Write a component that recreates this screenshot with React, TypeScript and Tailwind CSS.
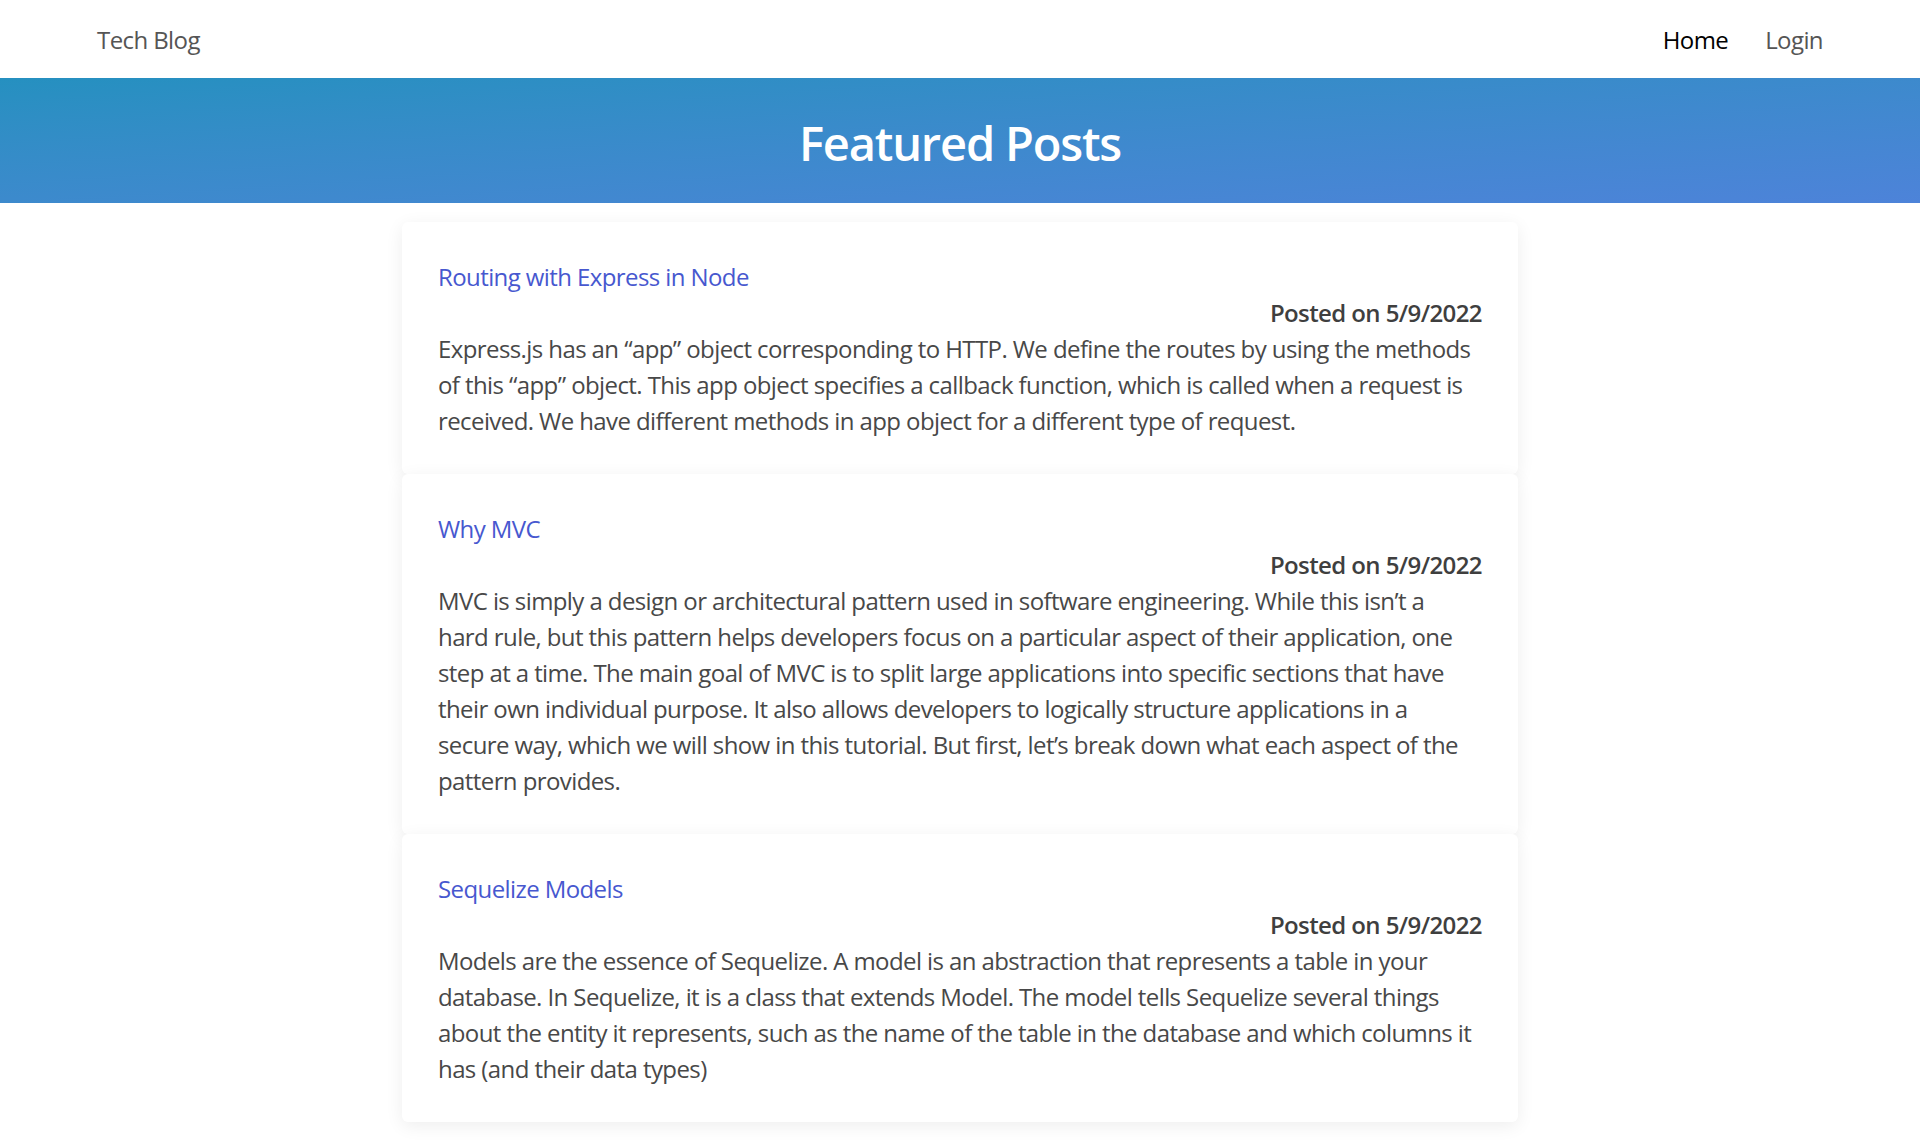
const posts = [
  {
    title: "Routing with Express in Node",
    date: "5/9/2022",
    lines: [
      "Express.js has an \u201capp\u201d object corresponding to HTTP. We define the routes by using the methods",
      "of this \u201capp\u201d object. This app object specifies a callback function, which is called when a request is",
      "received. We have different methods in app object for a different type of request.",
    ],
  },
  {
    title: "Why MVC",
    date: "5/9/2022",
    lines: [
      "MVC is simply a design or architectural pattern used in software engineering. While this isn\u2019t a",
      "hard rule, but this pattern helps developers focus on a particular aspect of their application, one",
      "step at a time. The main goal of MVC is to split large applications into specific sections that have",
      "their own individual purpose. It also allows developers to logically structure applications in a",
      "secure way, which we will show in this tutorial. But first, let\u2019s break down what each aspect of the",
      "pattern provides.",
    ],
  },
  {
    title: "Sequelize Models",
    date: "5/9/2022",
    lines: [
      "Models are the essence of Sequelize. A model is an abstraction that represents a table in your",
      "database. In Sequelize, it is a class that extends Model. The model tells Sequelize several things",
      "about the entity it represents, such as the name of the table in the database and which columns it",
      "has (and their data types)",
    ],
  },
];

const PostCard = ({ title, date, lines }: { title: string; date: string; lines: string[] }) => {
  return (
    <div className="rounded-md bg-white px-9 pt-[37px] pb-[35px] shadow-[0_4px_18px_rgba(0,0,0,0.07)]">
      <a href="#" className="block text-[24px] leading-[36px] text-[#4758cf]">
        {title}
      </a>
      <p className="text-right text-[24px] font-semibold leading-[36px] text-[#3f3f3f]">
        Posted on {date}
      </p>
      <p className="whitespace-nowrap text-[24px] leading-[36px] text-[#484848]">
        {lines.map((line, i) => (
          <span key={i}>
            {line}
            {i < lines.length - 1 && <br />}
          </span>
        ))}
      </p>
    </div>
  );
};

export default function App() {
  return (
    <div className="min-h-[1140px] bg-white font-['Segoe_UI','Open_Sans',sans-serif] tracking-[-0.037em]">
      <nav className="flex h-[78px] items-center justify-between px-[97px] pt-[2px]">
        <a href="#" className="text-[24px] text-[#555]">
          Tech Blog
        </a>
        <div className="flex gap-[37px] text-[24px]">
          <a href="#" className="text-black">
            Home
          </a>
          <a href="#" className="text-[#555]">
            Login
          </a>
        </div>
      </nav>

      <header className="flex h-[125px] items-center justify-center bg-linear-to-br from-[#2590c0] to-[#4d83d9] pt-[5px]">
        <h1 className="text-[47px] font-semibold tracking-[-0.025em] text-white">Featured Posts</h1>
      </header>

      <main className="mx-auto mt-[19px] flex w-[1116px] flex-col">
        {posts.map((p) => (
          <PostCard key={p.title} {...p} />
        ))}
      </main>
    </div>
  );
}
